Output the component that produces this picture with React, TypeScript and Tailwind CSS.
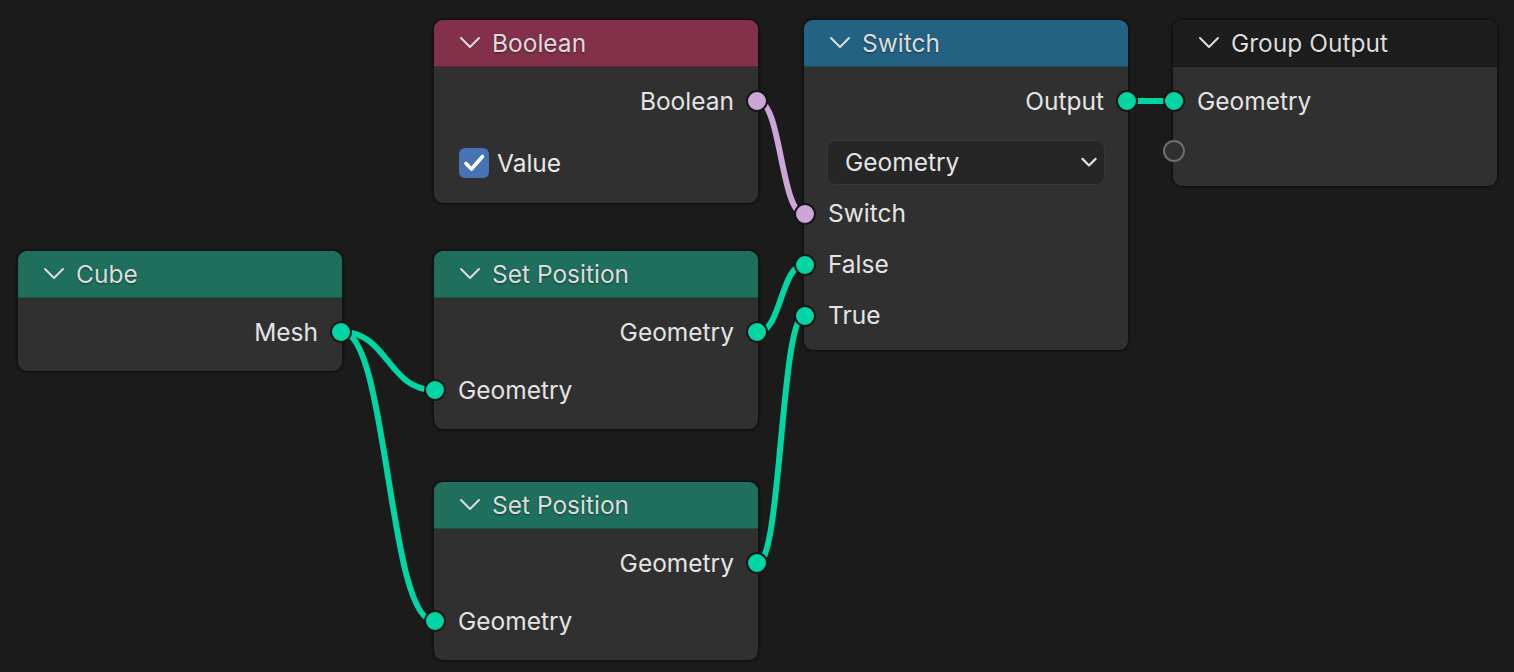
import React from "react"

const TEAL = "#00d6a3"
const LAVENDER = "#cca6d6"

// bezier like blender: horizontal handles at half the x distance
function link(x1: number, y1: number, x2: number, y2: number) {
  const d = Math.abs(x2 - x1) * 0.5
  return `M ${x1} ${y1} C ${x1 + d} ${y1}, ${x2 - d} ${y2}, ${x2} ${y2}`
}

const links = [
  { d: link(758, 101, 804, 214), color: LAVENDER },
  { d: link(342, 332, 434, 390), color: TEAL },
  { d: link(342, 332, 434, 621), color: TEAL },
  { d: link(758, 332, 804, 265), color: TEAL },
  { d: link(758, 563, 804, 316), color: TEAL },
  { d: link(1127, 101, 1174, 101), color: TEAL },
]

function Chevron({ className = "", width = 2 }: { className?: string; width?: number }) {
  return (
    <svg width="22" height="14" viewBox="0 0 22 14" className={className}>
      <path d="M2 2 L11 11 L20 2" fill="none" stroke="currentColor" strokeWidth={width} strokeLinecap="round" strokeLinejoin="round" />
    </svg>
  )
}

function Socket({ side, type = "geo" }: { side: "left" | "right"; type?: "geo" | "bool" | "empty" }) {
  const pos = side === "left" ? "-left-[10px]" : "-right-[10px]"
  if (type === "empty") {
    return (
      <span className={`absolute ${pos} top-1/2 -translate-y-1/2 w-[22px] h-[22px] rounded-full border-2 border-[#6e6e6e] bg-[#303030]`} />
    )
  }
  const fill = type === "bool" ? "bg-[#cca6d6]" : "bg-[#00d6a3]"
  return (
    <span className={`absolute ${pos} top-1/2 -translate-y-1/2 w-[22px] h-[22px] rounded-full border-2 border-[#161616] ${fill}`} />
  )
}

function Node({
  className,
  title,
  header,
  children,
}: {
  className: string
  title: string
  header: string
  children: React.ReactNode
}) {
  return (
    <div className={`absolute w-[324px] rounded-[9px] bg-[#303030] shadow-[0_0_3px_1px_rgba(0,0,0,0.55)] ${className}`}>
      <div className={`h-[47px] rounded-t-[9px] border-b border-black/25 flex items-center pl-[25px] gap-[11px] text-[#dcdcdc] ${header}`}>
        <Chevron />
        <span className="text-[24.5px] leading-none [text-shadow:0_1px_2px_rgba(0,0,0,0.45)]">{title}</span>
      </div>
      {children}
    </div>
  )
}

function Row({
  label,
  side,
  type = "geo",
  className = "",
}: {
  label?: string
  side: "left" | "right"
  type?: "geo" | "bool" | "empty"
  className?: string
}) {
  return (
    <div
      className={`relative h-[44px] flex items-center text-[24.5px] text-[#e4e4e4] ${
        side === "right" ? "justify-end pr-[24px]" : "pl-[24px]"
      } ${className}`}
    >
      {label}
      <Socket side={side} type={type} />
    </div>
  )
}

export default function App() {
  return (
    <div className="relative w-[1514px] h-[672px] overflow-hidden bg-[#1b1b1b] font-['Inter','Noto_Sans',sans-serif]">
      <svg className="absolute inset-0" width="1514" height="672">
        {links.map((l, i) => (
          <path key={i} d={l.d} fill="none" stroke={l.color} strokeWidth="6" strokeLinecap="round" />
        ))}
      </svg>

      {/* Boolean */}
      <Node className="left-[434px] top-[20px]" title="Boolean" header="bg-[#83304a]">
        <div className="pt-[12px] pb-[18px]">
          <Row label="Boolean" side="right" type="bool" />
          <div className="h-[44px] mt-[18px] flex items-center pl-[25px] gap-[8px] text-[24.5px] text-[#e8e8e8]">
            <span className="w-[30px] h-[30px] rounded-[6px] bg-[#4772b3] flex items-center justify-center">
              <svg width="30" height="30" viewBox="0 0 30 30">
                <path d="M7 15.5 L12.5 21 L23.5 8.5" fill="none" stroke="white" strokeWidth="3.6" strokeLinecap="round" strokeLinejoin="round" />
              </svg>
            </span>
            Value
          </div>
        </div>
      </Node>

      {/* Switch */}
      <Node className="left-[804px] top-[20px]" title="Switch" header="bg-[#246283]">
        <div className="pt-[12px] pb-[9px]">
          <Row label="Output" side="right" />
          <div className="mx-[23px] mt-[17px] h-[45px] rounded-[8px] bg-[#262626] border border-[#383838] flex items-center justify-between pl-[17px] pr-[7px] text-[24.5px] text-[#e4e4e4]">
            <span>Geometry</span>
            <Chevron className="w-[16px] h-[11px] text-[#e0e0e0]" width={3} />
          </div>
          <div className="mt-[3px]">
            <Row label="Switch" side="left" type="bool" className="h-[51px]" />
            <Row label="False" side="left" className="h-[51px]" />
            <Row label="True" side="left" className="h-[51px]" />
          </div>
        </div>
      </Node>

      {/* Group Output */}
      <Node className="left-[1173px] top-[20px]" title="Group Output" header="bg-[#1d1d1d]">
        <div className="pt-[12px] pb-[13px]">
          <Row label="Geometry" side="left" />
          <Row side="left" type="empty" className="mt-[6px]" />
        </div>
      </Node>

      {/* Cube */}
      <Node className="left-[18px] top-[251px]" title="Cube" header="bg-[#1e6f5c]">
        <div className="pt-[12px] pb-[17px]">
          <Row label="Mesh" side="right" />
        </div>
      </Node>

      {/* Set Position 1 */}
      <Node className="left-[434px] top-[251px]" title="Set Position" header="bg-[#1e6f5c]">
        <div className="pt-[12px] pb-[17px]">
          <Row label="Geometry" side="right" />
          <Row label="Geometry" side="left" className="mt-[14px]" />
        </div>
      </Node>

      {/* Set Position 2 */}
      <Node className="left-[434px] top-[482px]" title="Set Position" header="bg-[#1e6f5c]">
        <div className="pt-[12px] pb-[17px]">
          <Row label="Geometry" side="right" />
          <Row label="Geometry" side="left" className="mt-[14px]" />
        </div>
      </Node>
    </div>
  )
}
